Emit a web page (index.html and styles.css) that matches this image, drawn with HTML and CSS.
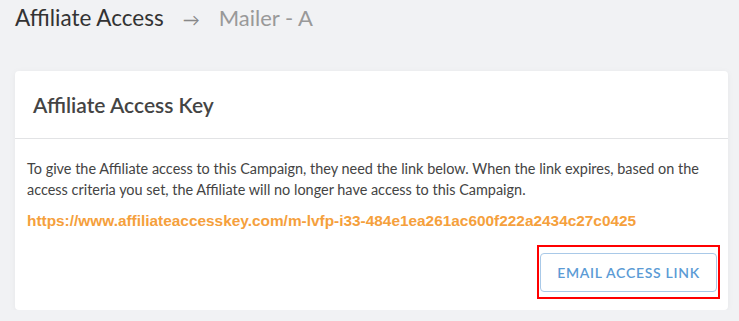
FILE: index.html
```html
<!DOCTYPE html>
<html lang="en">
<head>
  <meta charset="UTF-8">
  <meta name="viewport" content="width=device-width, initial-scale=1.0">
  <title>Affiliate Access</title>
  <link rel="stylesheet" href="styles.css">
</head>
<body>
  <!-- Breadcrumb -->
  <div class="crumbs">
    <span class="crumb-main">Affiliate Access</span>
    <span class="crumb-arrow">&rarr;</span>
    <span class="crumb-sub">Mailer - A</span>
  </div>

  <!-- Card with the access key -->
  <div class="card">
    <div class="card-head">
      <h2>Affiliate Access Key</h2>
    </div>
    <div class="card-body">
      <p class="info">To give the Affiliate access to this Campaign, they need the link below. When the link expires, based on the access criteria you set, the Affiliate will no longer have access to this Campaign.</p>
      <a class="key-link" href="#">https://www.affiliateaccesskey.com/m-lvfp-i33-484e1ea261ac600f222a2434c27c0425</a>
      <div class="actions">
        <div class="highlight">
          <button class="email-button">Email Access Link</button>
        </div>
      </div>
    </div>
  </div>
</body>
</html>
```

FILE: styles.css
```css
body {
  margin: 0;
  padding: 0 11px 0 15px;
  background-color: #f1f2f4;
  font-family: 'Lato', sans-serif;
  color: #444;
}

.crumbs {
  display: flex;
  align-items: baseline;
  height: 40px;
}

.crumb-main {
  font-size: 22.5px;
  color: #333;
  line-height: 36px;
}

.crumb-arrow {
  font-size: 17px;
  color: #888;
  margin: 0 19px 0 19px;
}

.crumb-sub {
  font-size: 22px;
  color: #999;
}

.card {
  margin-top: 31px;
  background-color: #fff;
  border-radius: 4px;
  box-shadow: 0 1px 6px rgba(0, 0, 0, 0.05);
}

.card-head {
  height: 67px;
  border-bottom: 1px solid #e2e3e5;
  padding: 0 18px;
  display: flex;
  align-items: center;
}

.card-head h2 {
  margin: 0;
  font-size: 21px;
  font-weight: 600;
  color: #444;
}

.card-body {
  padding: 19px 8px 11px 12px;
}

.info {
  margin: 0;
  font-size: 14.45px;
  line-height: 21px;
  color: #444;
}

.key-link {
  display: block;
  margin-top: 12px;
  font-family: 'Liberation Sans', Arial, sans-serif;
  font-weight: bold;
  font-size: 15.4px;
  color: #f5a03c;
  text-decoration: none;
}

.actions {
  display: flex;
  justify-content: flex-end;
  margin-top: 15px;
}

.highlight {
  border: 2px solid #f00;
  padding: 6px 1px 5px 1px;
}

.email-button {
  width: 177px;
  height: 39px;
  background-color: #fff;
  border: 1px solid #a9c9e8;
  border-radius: 4px;
  color: #5b9bd5;
  font-family: 'Lato', sans-serif;
  font-size: 14px;
  font-weight: 600;
  letter-spacing: 0.7px;
  text-transform: uppercase;
  cursor: pointer;
}
```
